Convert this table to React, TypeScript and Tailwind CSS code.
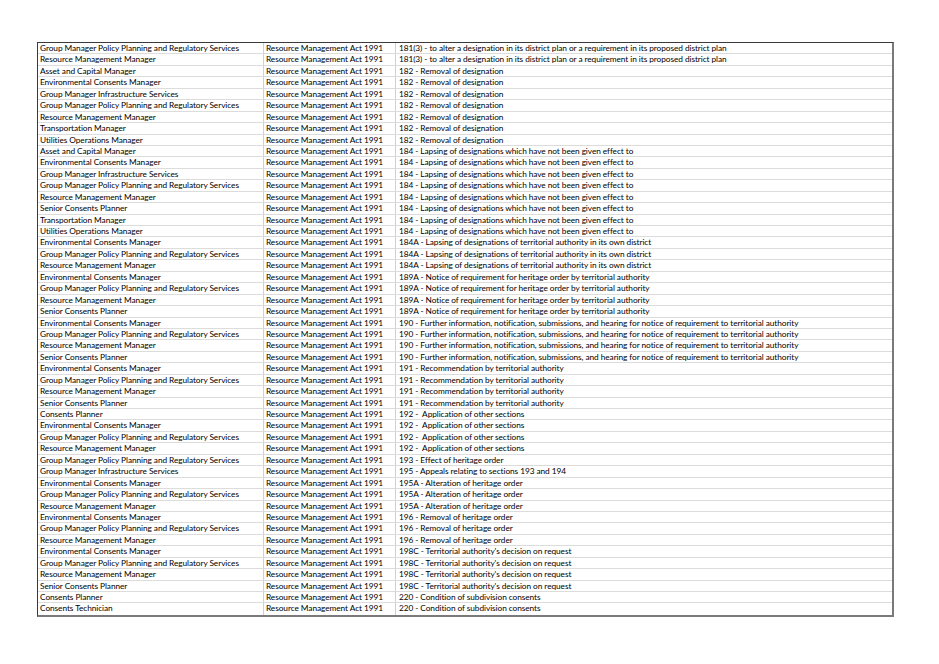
import React from 'react';

const GM = 'Group Manager Policy Planning and Regulatory Services';
const RMM = 'Resource Management Manager';
const ECM = 'Environmental Consents Manager';
const SCP = 'Senior Consents Planner';
const GMI = 'Group Manager Infrastructure Services';

const S181 = '181(3) - to alter a designation in its district plan or a requirement in its proposed district plan';
const S182 = '182 - Removal of designation';
const S184 = '184 - Lapsing of designations which have not been given effect to';
const S184A = '184A - Lapsing of designations of territorial authority in its own district';
const S189A = '189A - Notice of requirement for heritage order by territorial authority';
const S190 = '190 - Further information, notification, submissions, and hearing for notice of requirement to territorial authority';
const S191 = '191 - Recommendation by territorial authority';
const S192 = '192 -  Application of other sections';
const S195A = '195A - Alteration of heritage order';
const S196 = '196 - Removal of heritage order';
const S198C = "198C - Territorial authority's decision on request";
const S220 = '220 - Condition of subdivision consents';

const rows: [string, string][] = [
    [GM, S181],
    [RMM, S181],
    ['Asset and Capital Manager', S182],
    [ECM, S182],
    [GMI, S182],
    [GM, S182],
    [RMM, S182],
    ['Transportation Manager', S182],
    ['Utilities Operations Manager', S182],
    ['Asset and Capital Manager', S184],
    [ECM, S184],
    [GMI, S184],
    [GM, S184],
    [RMM, S184],
    [SCP, S184],
    ['Transportation Manager', S184],
    ['Utilities Operations Manager', S184],
    [ECM, S184A],
    [GM, S184A],
    [RMM, S184A],
    [ECM, S189A],
    [GM, S189A],
    [RMM, S189A],
    [SCP, S189A],
    [ECM, S190],
    [GM, S190],
    [RMM, S190],
    [SCP, S190],
    [ECM, S191],
    [GM, S191],
    [RMM, S191],
    [SCP, S191],
    ['Consents Planner', S192],
    [ECM, S192],
    [GM, S192],
    [RMM, S192],
    [GM, '193 - Effect of heritage order'],
    [GMI, '195 - Appeals relating to sections 193 and 194'],
    [ECM, S195A],
    [GM, S195A],
    [RMM, S195A],
    [ECM, S196],
    [GM, S196],
    [RMM, S196],
    [ECM, S198C],
    [GM, S198C],
    [RMM, S198C],
    [SCP, S198C],
    ['Consents Planner', S220],
    ['Consents Technician', S220],
];

export default function App() {
    return (
        <div className="w-[939px] h-[664px] bg-white pt-[42px] pl-[37px] font-['Lato','Open_Sans',sans-serif] text-[8.3px] tracking-[-0.07px] text-black [font-variant-ligatures:none]">
            <div className="w-[857px] border-t border-l border-[#3a3a3a] border-r-[2px] border-r-[#7a7a7a] border-b-[2px] border-b-[#7a7a7a]">
                {rows.map(([role, section], i) => (
                    <div
                        key={i}
                        className={`grid grid-cols-[225px_132px_1fr] h-[11.44px] leading-[11px] ${i < rows.length - 1 ? 'border-b border-[#dcdcdc]' : ''}`}
                    >
                        <div className="pl-[2px] whitespace-nowrap overflow-hidden">{role}</div>
                        <div className="pl-[2px] border-l border-[#d0d0d0] whitespace-nowrap overflow-hidden">Resource Management Act 1991</div>
                        <div className="pl-[3px] border-l border-[#d0d0d0] whitespace-pre overflow-hidden">{section}</div>
                    </div>
                ))}
            </div>
        </div>
    );
}
